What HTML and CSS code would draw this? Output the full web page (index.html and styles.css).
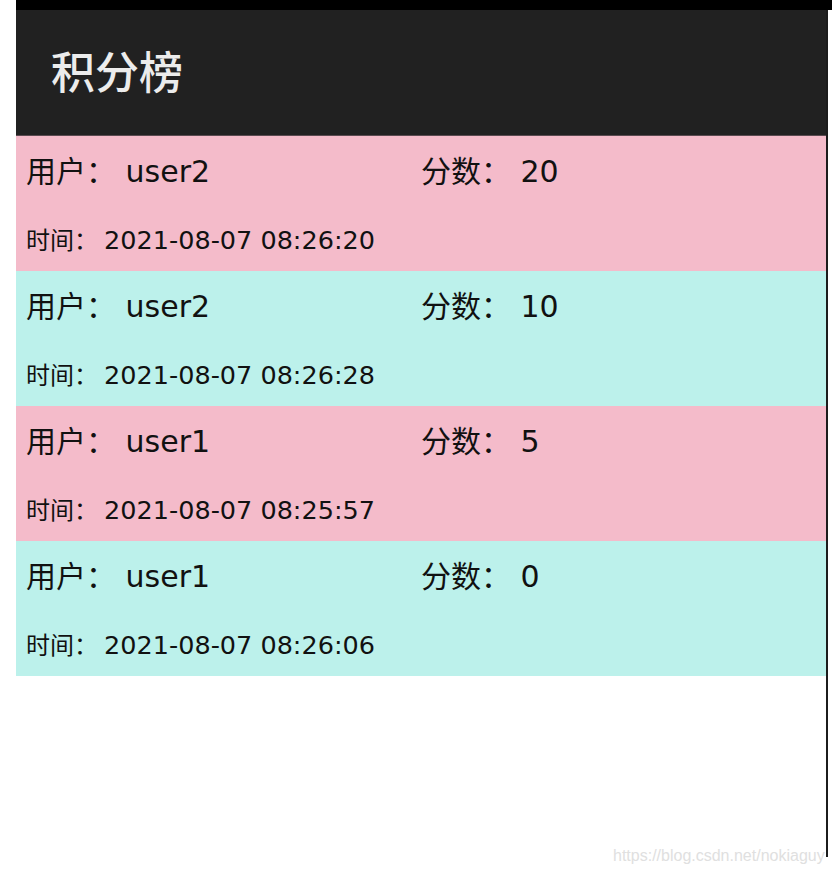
FILE: index.html
```html
<!DOCTYPE html>
<html lang="zh-CN">
<head>
<meta charset="utf-8">
<title>积分榜</title>
<link rel="stylesheet" href="styles.css">
</head>
<body>
<div class="topbar"></div>
<div class="frame">
  <header class="appbar"><h1 class="title">积分榜</h1></header>
  <ul class="list">
    <li class="row pink">
      <div class="line1"><span class="user">用户： user2</span><span class="score">分数： 20</span></div>
      <div class="time"><span class="label">时间：</span> 2021-08-07 08:26:20</div>
    </li>
    <li class="row cyan">
      <div class="line1"><span class="user">用户： user2</span><span class="score">分数： 10</span></div>
      <div class="time"><span class="label">时间：</span> 2021-08-07 08:26:28</div>
    </li>
    <li class="row pink">
      <div class="line1"><span class="user">用户： user1</span><span class="score">分数： 5</span></div>
      <div class="time"><span class="label">时间：</span> 2021-08-07 08:25:57</div>
    </li>
    <li class="row cyan">
      <div class="line1"><span class="user">用户： user1</span><span class="score">分数： 0</span></div>
      <div class="time"><span class="label">时间：</span> 2021-08-07 08:26:06</div>
    </li>
  </ul>
</div>
<div class="watermark">https://blog.csdn.net/nokiaguy</div>
</body>
</html>
```
FILE: styles.css
```css
html, body {
  margin: 0;
  padding: 0;
  background: #ffffff;
}
body {
  width: 832px;
  height: 876px;
  overflow: hidden;
  position: relative;
  font-family: "DejaVu Sans", "Noto Sans CJK SC", sans-serif;
  color: #111;
}
.topbar {
  margin-left: 16px;
  width: 816px;
  height: 10px;
  background: #000;
}
.frame {
  margin-left: 16px;
  width: 810px;
  height: 847px;
  border-right: 2px solid #1c1c1c;
}
.appbar {
  height: 126px;
  background: #212121;
  border-bottom: 1px solid #5a4a50;
  box-sizing: border-box;
  display: flex;
  align-items: center;
  padding-left: 35px;
  padding-bottom: 5px;
}
.title {
  margin: 0;
  font-family: "Noto Sans CJK SC", sans-serif;
  font-weight: 500;
  font-size: 44px;
  color: #ececec;
  line-height: 1;
}
.list {
  list-style: none;
  margin: 0;
  padding: 0;
}
.row {
  height: 135px;
  box-sizing: border-box;
  padding-left: 10px;
  padding-top: 16px;
}
.pink { background: #f4bbca; }
.cyan { background: #bcf1eb; }
.line1 {
  display: flex;
  font-size: 30px;
  line-height: 40px;
  height: 40px;
}
.user {
  width: 395px;
}
.time {
  margin-top: 30px;
  font-size: 25.5px;
  line-height: 34px;
}
.label {
  font-family: "Noto Sans CJK SC", sans-serif;
  font-size: 24px;
  margin-right: -2px;
}
.watermark {
  position: absolute;
  left: 613px;
  top: 847px;
  font-family: "Liberation Sans", Arial, sans-serif;
  font-size: 16px;
  color: #e0e0e0;
}
```
